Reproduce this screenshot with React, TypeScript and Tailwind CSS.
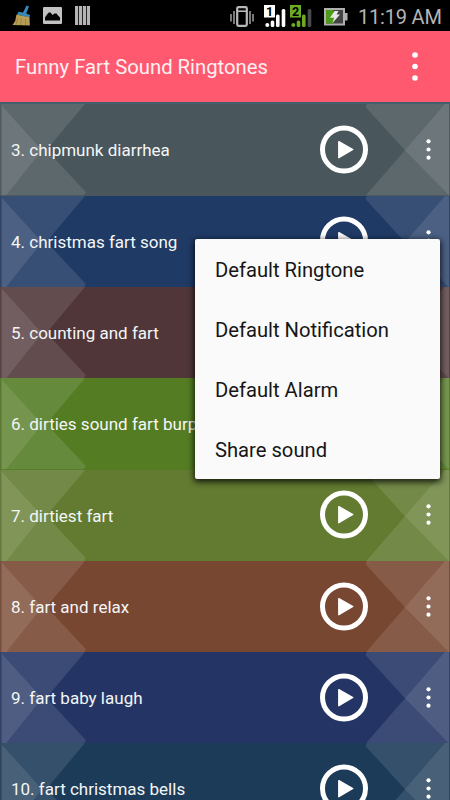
interface Sound {
  label: string
  colour: string
}

const SOUNDS: Sound[] = [
  { label: "3. chipmunk diarrhea",         colour: "bg-[#49565c]" },
  { label: "4. christmas fart song",       colour: "bg-[#1f3a65]" },
  { label: "5. counting and fart",         colour: "bg-[#503639]" },
  { label: "6. dirties sound fart burp",   colour: "bg-[#547c23]" },
  { label: "7. dirtiest fart",             colour: "bg-[#627b31]" },
  { label: "8. fart and relax",            colour: "bg-[#784731]" },
  { label: "9. fart baby laugh",           colour: "bg-[#243565]" },
  { label: "10. fart christmas bells",     colour: "bg-[#1c3b58]" },
]

const MENU = ["Default Ringtone", "Default Notification", "Default Alarm", "Share sound"]

// ── Status bar ─────────────────────────────────────────────────────────────

function BroomIcon() {
  return (
    <svg width="20" height="22" viewBox="0 0 20 22">
      <path d="M14.5 0.5 17 1.5 14.2 8.5 18 10 17.5 12.5 5 9.5 6.5 6.8 11 7.4Z" fill="#3489b8" />
      <path d="M4.5 9.5 17.5 12.2 17.8 20.5 0.5 20 3.2 16Z" fill="#b79d55" />
      <path d="M6 13 4 19.5M9.5 13.5 8.5 20M13.5 14 13.5 20" stroke="#8d773b" strokeWidth="0.7" fill="none" />
    </svg>
  )
}

function PictureIcon() {
  return (
    <svg width="19" height="17" viewBox="0 0 19 17">
      <rect width="19" height="17" rx="1" fill="#c2c2c2" />
      <path d="M2 13.5V10.5L4 7.5 5.8 5.5 7.5 5.5 9.5 8 11.5 6.5 13.5 6.5 15 8.5 17 10.5V13.5Z" fill="#050505" />
    </svg>
  )
}

function BarsIcon() {
  return (
    <svg width="15" height="19" viewBox="0 0 15 19">
      <path d="M0 0H3.2V19H0ZM4 0H7.2V19H4ZM8 0H11.2V19H8ZM12 0H15V19H12Z" fill="#b5b5b5" />
    </svg>
  )
}

function VibrateIcon() {
  return (
    <svg width="24" height="22" viewBox="0 0 24 22" fill="none" stroke="#b8b8b8">
      <rect x="7.2" y="1.2" width="9.6" height="18.6" rx="1.2" strokeWidth="2.2" />
      <path d="M8 5.2H16" strokeWidth="1.6" />
      <path d="M11 3H13" stroke="#111" strokeWidth="1" />
      <path d="M4 5V18M20 5V18M1 8V15.5M23 8V15.5" strokeWidth="1.3" />
    </svg>
  )
}

function SignalIcon({ sim, colour, last }: { sim: string; colour: string; last: string }) {
  return (
    <svg width="22" height="23" viewBox="0 0 22 23">
      <circle cx="3.3" cy="20" r="2" fill={colour} />
      <rect x="6.7" y="15.5" width="3.6" height="6.5" rx="1.5" fill={colour} />
      <rect x="12" y="9.5" width="3.6" height="12.5" rx="1.5" fill={colour} />
      <rect x="17.7" y="4" width="3.6" height="18" rx="1.5" fill={last} />
      <rect width="11" height="12.5" fill={colour} />
      <text x="5.5" y="10.8" textAnchor="middle" fontSize="12.5" fontWeight="700" fontFamily="Roboto, sans-serif" fill="#000">{sim}</text>
    </svg>
  )
}

function BatteryIcon() {
  return (
    <svg width="24" height="18" viewBox="0 0 24 18">
      <rect x="1" y="1" width="19" height="15.5" fill="#444" stroke="#b0b0b0" strokeWidth="2" />
      <rect x="2" y="2" width="7.5" height="13.5" fill="#4c9a16" />
      <rect x="21" y="5" width="2.5" height="7.5" fill="#b0b0b0" />
      <path d="M10.5 3 14.5 3 12.7 6.5 16 6.5 8.5 15 10 9.8 6 9.8Z" fill="#e6e6e6" />
    </svg>
  )
}

function StatusBar() {
  return (
    <div className="flex h-[31px] shrink-0 items-center bg-black pl-3 pr-2">
      <div className="flex items-center">
        <BroomIcon />
        <span className="ml-[11px]"><PictureIcon /></span>
        <span className="ml-[13px]"><BarsIcon /></span>
      </div>
      <div className="ml-auto flex items-center pt-0.5">
        <VibrateIcon />
        <span className="ml-2.5"><SignalIcon sim="1" colour="#fff" last="#fff" /></span>
        <span className="ml-1"><SignalIcon sim="2" colour="#6cab23" last="#4a4a4a" /></span>
        <span className="ml-3"><BatteryIcon /></span>
        <span className="ml-2.5 w-[84px] whitespace-nowrap text-[20px] leading-none tracking-[-0.2px] text-[#b4b4b4]">11:19 AM</span>
      </div>
    </div>
  )
}

// ── Sound list ─────────────────────────────────────────────────────────────

function Facets() {
  return (
    <svg className="absolute inset-0 h-full w-full" viewBox="0 0 450 91" preserveAspectRatio="none" fill="#fff">
      <path d="M0 0H85L49.5 42V49L86 88 83.5 91H0Z" fillOpacity="0.11" />
      <path d="M2 2 42 46 6 91H2Z" fillOpacity="0.1" />
      <path d="M367 0 365.5 3 405 46 366 91H450V0Z" fillOpacity="0.11" />
      <path d="M445 0 405 46 449 91V0Z" fillOpacity="0.1" />
      <path d="M0 0H1V91H0ZM449 0H450V91H449Z" fill="#000" fillOpacity="0.12" />
    </svg>
  )
}

function PlayButton() {
  return (
    <svg width="48" height="49" viewBox="0 0 48 49">
      <circle cx="24" cy="24.5" r="21.5" fill="none" stroke="#fff" strokeWidth="5" />
      <path d="M18.8 16.6 32.8 24.5 18.8 32.7Z" fill="#fff" stroke="#fff" strokeWidth="1.4" strokeLinejoin="round" />
    </svg>
  )
}

function SoundRow({ sound }: { sound: Sound }) {
  return (
    <li className={`relative h-[91.3px] shrink-0 ${sound.colour}`}>
      <Facets />
      <div className="relative flex h-[90.5px] items-center pl-[11px] pr-[19px]">
        <span className="flex-1 whitespace-nowrap pt-[3px] text-[17px] text-[#f4f6f6]">{sound.label}</span>
        <PlayButton />
        <svg className="ml-[58px]" width="5" height="21" viewBox="0 0 5 21" fill="#fff">
          <circle cx="2.5" cy="2.3" r="2.1" />
          <circle cx="2.5" cy="10.5" r="2.1" />
          <circle cx="2.5" cy="18.7" r="2.1" />
        </svg>
      </div>
    </li>
  )
}

// ── Screen ─────────────────────────────────────────────────────────────────

export default function App() {
  return (
    <div className="relative flex h-[800px] w-[450px] flex-col overflow-hidden bg-black font-['Roboto',sans-serif]">
      <StatusBar />

      <header className="flex h-[71px] shrink-0 items-center justify-between bg-[#ff5970] pl-[15px] pr-8">
        <h1 className="whitespace-nowrap pt-0.5 text-[20.3px] text-[#fff0f2]">Funny Fart Sound Ringtones</h1>
        <svg width="6" height="29" viewBox="0 0 6 29" fill="#fff">
          <circle cx="3" cy="3" r="2.8" />
          <circle cx="3" cy="14.5" r="2.8" />
          <circle cx="3" cy="26" r="2.8" />
        </svg>
      </header>

      {/* tail of the row scrolled under the header */}
      <div className="h-[2.4px] shrink-0 bg-[#41606d]" />
      <ul className="flex flex-col">
        {SOUNDS.map(sound => <SoundRow key={sound.label} sound={sound} />)}
      </ul>

      {/* Row menu */}
      <div className="absolute left-[195px] top-[239px] w-[245px] rounded-[2px] bg-[#fafafa] shadow-[0_2px_6px_1px_rgba(0,0,0,0.8)]">
        {MENU.map(item => (
          <div key={item} className="flex h-[60px] items-center whitespace-nowrap pl-5 pt-0.5 text-[20.2px] text-[#161616]">
            {item}
          </div>
        ))}
      </div>
    </div>
  )
}
